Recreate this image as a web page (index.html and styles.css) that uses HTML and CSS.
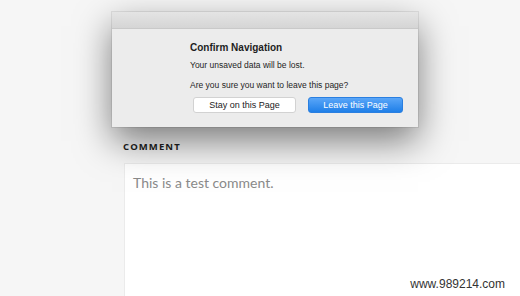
FILE: index.html
```html
<!DOCTYPE html>
<html lang="en">
<head>
    <meta charset="UTF-8">
    <meta name="viewport" content="width=device-width, initial-scale=1.0">
    <title>Comment</title>
    <link rel="stylesheet" href="styles.css">
</head>
<body>
    <main class="page">
        <section class="comment-form">
            <label class="comment-label" for="comment">Comment</label>
            <div class="comment-box" id="comment">This is a test comment.</div>
        </section>
    </main>

    <div class="dialog">
        <div class="dialog-titlebar"></div>
        <div class="dialog-body">
            <h2 class="dialog-title">Confirm Navigation</h2>
            <p class="dialog-text">Your unsaved data will be lost.</p>
            <p class="dialog-text">Are you sure you want to leave this page?</p>
            <div class="dialog-buttons">
                <button class="btn btn-stay">Stay on this Page</button>
                <button class="btn btn-leave">Leave this Page</button>
            </div>
        </div>
    </div>

    <div class="watermark">www.989214.com</div>
</body>
</html>
```

FILE: styles.css
```css
:root {
    --page-bg: #f6f6f6;
    --dialog-bg: #ececec;
    --text-color: #1e1e1e;
    --blue: #2f8cf0;
}

body {
    margin: 0;
    width: 520px;
    height: 296px;
    overflow: hidden;
    background-color: var(--page-bg);
    font-family: 'Liberation Sans', Arial, sans-serif;
    color: var(--text-color);
}

.page {
    padding: 141px 0 0 123px;
}

.comment-label {
    display: block;
    font-family: 'Open Sans', sans-serif;
    font-weight: 700;
    font-size: 9.5px;
    line-height: 12px;
    letter-spacing: 1.1px;
    text-transform: uppercase;
    color: #222;
    margin-bottom: 10px;
}

.comment-box {
    margin-left: 1px;
    width: 400px;
    height: 133px;
    box-sizing: border-box;
    background: #fff;
    border: 1px solid #ebebeb;
    border-right: 0;
    border-bottom: 0;
    padding: 9px 8px;
    font-family: 'Lato', sans-serif;
    font-size: 14px;
    line-height: 20px;
    color: #8a8a8a;
}

/* confirm dialog sits over the page */
.dialog {
    position: absolute;
    left: 112px;
    top: 12px;
    width: 306px;
    height: 115px;
    background: var(--dialog-bg);
    box-shadow: 0 14px 34px rgba(0, 0, 0, 0.5), 0 0 0 1px rgba(0, 0, 0, 0.08);
}

.dialog-titlebar {
    height: 16px;
    background: linear-gradient(#e4e4e4, #d5d5d5);
    border-bottom: 1px solid #c9c9c9;
}

.dialog-body {
    padding: 13px 0 0 78px;
}

.dialog-title {
    margin: 0 0 6px;
    font-size: 10px;
    line-height: 12px;
    font-weight: 700;
}

.dialog-text {
    margin: 0 0 9px;
    font-size: 8.5px;
    line-height: 11px;
}

.dialog-text:last-of-type {
    margin-bottom: 6px;
}

.dialog-buttons {
    display: flex;
    gap: 12px;
    margin: 1px 0 0 3px;
}

.btn {
    height: 16px;
    padding: 0;
    border-radius: 3px;
    font-family: 'Liberation Sans', Arial, sans-serif;
    font-size: 9px;
}

.btn-stay {
    width: 103px;
    background: #fff;
    color: #222;
    border: 1px solid #d2d2d2;
}

.btn-leave {
    width: 95px;
    background: linear-gradient(#5aa6f8, #1f7fe8);
    color: #fff;
    border: 1px solid #2a7fe0;
}

.watermark {
    position: absolute;
    right: 15px;
    bottom: 5px;
    font-size: 12px;
    color: #333;
}
```
